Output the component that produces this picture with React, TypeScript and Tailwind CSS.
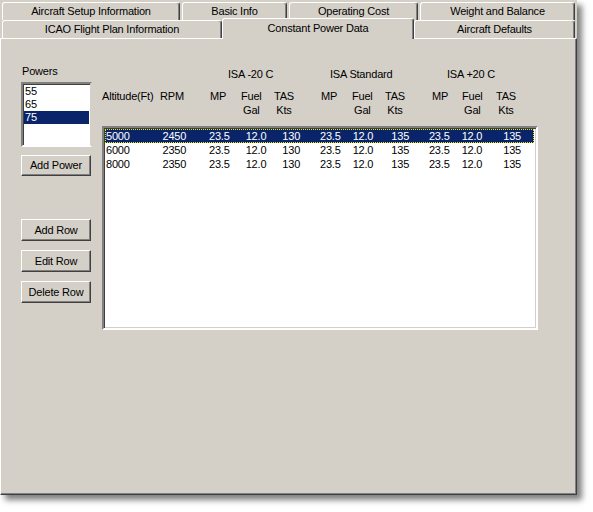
import React from "react";

const rows = [
  ["5000", "2450", "23.5", "12.0", "130", "23.5", "12.0", "135", "23.5", "12.0", "135"],
  ["6000", "2350", "23.5", "12.0", "130", "23.5", "12.0", "135", "23.5", "12.0", "135"],
  ["8000", "2350", "23.5", "12.0", "130", "23.5", "12.0", "135", "23.5", "12.0", "135"],
];

// cell widths for table rows (text left edges)
const cellW = [
  "w-[57px]",
  "w-[47px]",
  "w-[37px]",
  "w-[37px]",
  "w-[38px]",
  "w-[33px]",
  "w-[39px]",
  "w-[38px]",
  "w-[33px]",
  "w-[42px]",
  "w-[30px]",
];

const tabBase =
  "flex items-center justify-center bg-[#d4d0c8] border-t border-l border-white border-r border-r-[#404040] rounded-t-[3px] shadow-[inset_-1px_0_0_#808080]";

const Tab = ({ label, className }: { label: string; className: string }) => (
  <div className={`${tabBase} ${className}`}>{label}</div>
);

const Btn = ({ label, className }: { label: string; className: string }) => (
  <div
    className={`flex items-center justify-center w-[70px] bg-[#d4d0c8] border border-t-white border-l-white border-r-[#404040] border-b-[#404040] shadow-[inset_-1px_-1px_0_#808080] ${className}`}
  >
    {label}
  </div>
);

const Stack = ({ top, bottom }: { top: string; bottom: string }) => (
  <div className="inline-flex flex-col items-center leading-[14px]">
    <span>{top}</span>
    <span>{bottom}</span>
  </div>
);

export default function App() {
  return (
    <div className="w-[593px] h-[512px] bg-white text-black text-[11px] tracking-[-0.2px] leading-[13px] font-['Liberation_Sans',Arial,sans-serif]">
      <div className="w-[577px] h-[495px] bg-[#d4d0c8] flex flex-col shadow-[5px_5px_6px_rgba(0,0,0,0.5)]">
        {/* Tab row 1 */}
        <div className="flex gap-[2px] pt-[2px] pl-[2px]">
          <Tab label="Aircraft Setup Information" className="w-[178px] h-[18px]" />
          <Tab label="Basic Info" className="w-[105px] h-[18px]" />
          <Tab label="Operating Cost" className="w-[129px] h-[18px]" />
          <Tab label="Weight and Balance" className="w-[155px] h-[18px]" />
        </div>
        {/* Tab row 2 */}
        <div className="flex items-end h-[18px] pl-[2px]">
          <Tab label="ICAO Flight Plan Information" className="w-[220px] h-[18px]" />
          <Tab
            label="Constant Power Data"
            className="w-[192px] h-[21px] mb-[-1px] relative z-10 pb-[2px]"
          />
          <Tab label="Aircraft Defaults" className="w-[161px] h-[18px]" />
        </div>

        {/* Body */}
        <div className="flex-1 flex border-t border-l border-white border-r border-b border-r-[#404040] border-b-[#404040] shadow-[inset_-1px_-1px_0_#808080] pl-[20px] pt-[26px]">
          {/* Left column */}
          <div className="flex flex-col w-[71px]">
            <div className="pl-[1px]">Powers</div>
            <div className="mt-[4px] h-[65px] bg-white border-2 border-t-[#808080] border-l-[#808080] border-b-white border-r-[#d4d0c8] shadow-[inset_1px_1px_0_#404040] pt-[1px] pl-[1px] pr-[1px]">
              <div className="h-[13px] pl-[1px]">55</div>
              <div className="h-[13px] pl-[1px]">65</div>
              <div className="h-[13px] pl-[1px] bg-[#0a246a] text-white">75</div>
            </div>
            <Btn label="Add Power" className="mt-[8px] h-[21px]" />
            <Btn label="Add Row" className="mt-[43px] h-[22px]" />
            <Btn label="Edit Row" className="mt-[9px] h-[22px]" />
            <Btn label="Delete Row" className="mt-[9px] h-[22px]" />
          </div>

          {/* Right column */}
          <div className="ml-[10px] flex flex-col pt-[3px]">
            <div className="flex pl-[126px] h-[13px]">
              <div className="w-[102px]">ISA -20 C</div>
              <div className="w-[117px]">ISA Standard</div>
              <div>ISA +20 C</div>
            </div>
            <div className="flex mt-[8px] h-[28px] leading-[14px]">
              <div className="w-[58px]">Altitude(Ft)</div>
              <div className="w-[50px]">RPM</div>
              <div className="w-[31px]">MP</div>
              <div className="w-[33px]">
                <Stack top="Fuel" bottom="Gal" />
              </div>
              <div className="w-[47px]">
                <Stack top="TAS" bottom="Kts" />
              </div>
              <div className="w-[31px]">MP</div>
              <div className="w-[33px]">
                <Stack top="Fuel" bottom="Gal" />
              </div>
              <div className="w-[47px]">
                <Stack top="TAS" bottom="Kts" />
              </div>
              <div className="w-[30px]">MP</div>
              <div className="w-[34px]">
                <Stack top="Fuel" bottom="Gal" />
              </div>
              <div>
                <Stack top="TAS" bottom="Kts" />
              </div>
            </div>

            {/* Table */}
            <div className="mt-[9px] w-[436px] h-[204px] bg-white border-2 border-t-[#808080] border-l-[#808080] border-b-white border-r-white shadow-[inset_1px_1px_0_#404040,inset_-1px_-1px_0_#d4d0c8] pt-[1px] pl-[1px] pr-[2px]">
              {rows.map((r, i) => (
                <div
                  key={i}
                  className={
                    i === 0
                      ? "flex items-center h-[14px] bg-[#0a246a] text-white border border-dotted border-[#e8e800]"
                      : "flex items-center h-[14px] border border-transparent"
                  }
                >
                  {r.map((v, j) => (
                    <div key={j} className={cellW[j]}>
                      {v}
                    </div>
                  ))}
                </div>
              ))}
            </div>
          </div>
        </div>
      </div>
    </div>
  );
}
